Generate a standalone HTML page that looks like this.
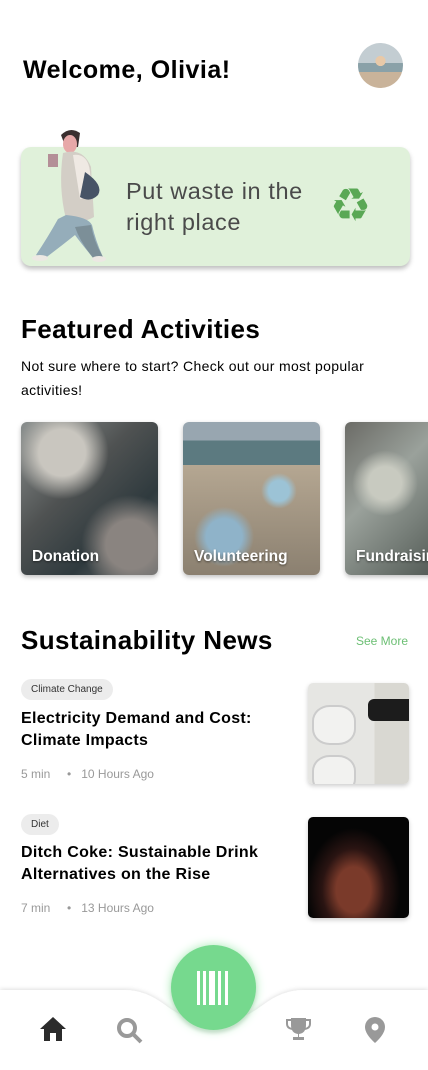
<!DOCTYPE html>
<html><head><meta charset="utf-8"><style>
*{margin:0;padding:0;box-sizing:border-box}
body{width:428px;height:1070px;background:#fff;font-family:"Liberation Sans","DejaVu Sans",sans-serif;position:relative;overflow:hidden;color:#000}
.abs{position:absolute}
h1{position:absolute;left:23px;top:56px;font-size:25px;font-weight:bold;letter-spacing:.5px}
.av{left:358px;top:43px;width:45px;height:45px;border-radius:50%;background:radial-gradient(circle at 50% 40%,#e8c9a8 0 14%,transparent 15%),linear-gradient(#c3cdd2 0 45%,#8aa1a8 45% 65%,#c9b39a 65%)}
.banner{left:21px;top:147px;width:389px;height:119px;background:#e0f1da;border-radius:10px;box-shadow:0 3px 5px rgba(0,0,0,.25)}
.btxt{left:126px;top:176px;font-size:23.5px;line-height:31px;color:#4a4a4a;letter-spacing:.6px}
.h2{font-size:26px;font-weight:bold;left:21px;letter-spacing:.4px}
.card{top:422px;width:137px;height:153px;border-radius:6px;box-shadow:0 2px 5px rgba(0,0,0,.25);overflow:hidden}
.card span{position:absolute;left:11px;bottom:9px;color:#fff;font-size:15.5px;font-weight:bold;text-shadow:0 1px 2px rgba(0,0,0,.5)}
.tag{left:21px;height:21px;border-radius:11px;background:#ececec;font-size:10px;line-height:21px;padding:0 10px;color:#333}
.nt{left:21px;font-size:16px;font-weight:bold;line-height:22px;letter-spacing:.3px}
.meta{left:21px;font-size:12px;color:#999}
.thumb{left:308px;width:101px;height:101px;border-radius:5px;box-shadow:0 2px 5px rgba(0,0,0,.2);overflow:hidden}
</style></head><body>
<h1>Welcome, Olivia!</h1>
<div class="abs av"></div>
<div class="abs banner"></div>
<svg class="abs" style="left:28px;top:127px" width="80" height="135" viewBox="0 0 80 135">
<path d="M33 8 Q42 -1 52 6 L50 20 Q42 20 36 16Z" fill="#3a2f2f"/>
<ellipse cx="42" cy="17" rx="7" ry="9" fill="#e7a8a8"/>
<path d="M35 26 Q55 20 63 40 L66 90 Q52 98 38 92 Q30 60 35 26Z" fill="#d3cec6"/>
<path d="M45 28 Q60 26 62 45 L64 70 L52 72Z" fill="#efe9e3"/>
<path d="M57 45 Q76 58 70 68 Q62 76 52 70Z" fill="#475466"/>
<rect x="20" y="27" width="10" height="13" fill="#b48f97"/>
<path d="M38 88 Q60 90 64 98 Q68 115 75 130 L66 132 Q52 115 47 108 Q32 120 16 132 L8 128 Q20 110 30 92Z" fill="#95adba"/>
<path d="M47 100 Q52 115 66 132 L75 130 Q66 115 63 98Z" fill="#7c8f98"/>
<ellipse cx="12" cy="131" rx="8" ry="3" fill="#ece8e3"/><ellipse cx="71" cy="132" rx="7" ry="3" fill="#ece8e3"/>
</svg>
<div class="abs btxt">Put waste in the<br>right place</div>
<div class="abs" style="left:330px;top:182px;font-size:46px;color:#5aa855;line-height:46px">♻</div>
<div class="abs h2" style="top:314px">Featured Activities</div>
<div class="abs" style="left:21px;top:354px;font-size:14px;line-height:24px;letter-spacing:.35px">Not sure where to start? Check out our most popular<br>activities!</div>
<div class="abs card" style="left:21px;background:radial-gradient(circle at 30% 20%,#c9c6bf 0 15%,transparent 30%),radial-gradient(circle at 80% 80%,#8a8480 0 15%,transparent 30%),linear-gradient(135deg,#8a8f8e,#4f5252 40%,#2f3a3e 70%,#6d7070)"><span>Donation</span></div>
<div class="abs card" style="left:183px;background:radial-gradient(circle at 30% 75%,#8fb3c9 0 12%,transparent 20%),radial-gradient(circle at 70% 45%,#9cc3d6 0 8%,transparent 14%),linear-gradient(#98a6b0 0 12%,#5c7a80 12% 28%,#b5a792 28%,#8b8070)"><span>Volunteering</span></div>
<div class="abs card" style="left:345px;width:100px;background:radial-gradient(circle at 40% 40%,#c8cac0 0 15%,transparent 30%),linear-gradient(135deg,#6b6b66,#9aa19b 40%,#4d5550)"><span>Fundraising</span></div>
<div class="abs h2" style="top:625px">Sustainability News</div>
<div class="abs" style="left:356px;top:634px;font-size:12px;color:#6cbf74">See More</div>
<div class="abs tag" style="top:679px">Climate Change</div>
<div class="abs nt" style="top:708px">Electricity Demand and Cost:<br>Climate Impacts</div>
<div class="abs meta" style="top:767px">5 min &nbsp;&nbsp;&nbsp;&nbsp;•&nbsp;&nbsp; 10 Hours Ago</div>
<div class="abs thumb" style="top:683px;background:linear-gradient(90deg,#e6e6e3 0 66%,#d9d8d2 66%)">
<div class="abs" style="left:4px;top:22px;width:44px;height:40px;border-radius:40%;border:2px solid #ccc;background:#f2f2f0"></div>
<div class="abs" style="left:4px;top:72px;width:44px;height:40px;border-radius:40%;border:2px solid #ccc;background:#f2f2f0"></div>
<div class="abs" style="left:60px;top:16px;width:50px;height:22px;border-radius:6px;background:#1c1c1c"></div>
</div>
<div class="abs tag" style="top:814px">Diet</div>
<div class="abs nt" style="top:842px">Ditch Coke: Sustainable Drink<br>Alternatives on the Rise</div>
<div class="abs meta" style="top:901px">7 min &nbsp;&nbsp;&nbsp;&nbsp;•&nbsp;&nbsp; 13 Hours Ago</div>
<div class="abs thumb" style="top:817px;background:radial-gradient(ellipse at 45% 72%,#7a3a2a 0 22%,#2a1412 40%,#050505 60%)"></div>
<svg class="abs" style="left:0;top:980px" width="428" height="90">
<defs><filter id="s"><feDropShadow dx="0" dy="-1" stdDeviation="2" flood-opacity=".12"/></filter></defs>
<path d="M0 10 H125 Q145 10 165 25 Q214 62 263 25 Q283 10 303 10 H428 V90 H0Z" fill="#fff" filter="url(#s)"/>
</svg>
<div class="abs" style="left:171px;top:945px;width:85px;height:85px;border-radius:50%;background:#76d98e;box-shadow:0 0 10px #a8eab6,0 3px 3px rgba(0,0,0,.15)"></div>
<svg class="abs" style="left:196px;top:971px" width="35" height="34"><g fill="#fff"><rect x="1" width="3" height="34"/><rect x="7" width="3" height="34"/><rect x="13" width="6" height="34"/><rect x="22" width="3" height="34"/><rect x="29" width="3" height="34"/></g></svg>
<svg class="abs" style="left:40px;top:1017px" width="26" height="24" viewBox="0 0 26 24"><path d="M13 0 L26 12 H22 V24 H16 V16 H10 V24 H4 V12 H0Z" fill="#2b2b2b"/></svg>
<svg class="abs" style="left:116px;top:1017px" width="27" height="27"><circle cx="11" cy="11" r="8" fill="none" stroke="#999" stroke-width="4"/><path d="M17 17 L25 25" stroke="#999" stroke-width="4"/></svg>
<svg class="abs" style="left:285px;top:1017px" width="27" height="25"><path d="M6 1 H21 V8 Q21 16 14 17 V20 H19 V23 H8 V20 H13 V17 Q6 16 6 8Z" fill="#999"/><path d="M6 3 H2 V7 Q2 11 7 12 M21 3 H25 V7 Q25 11 20 12" fill="none" stroke="#999" stroke-width="2"/></svg>
<svg class="abs" style="left:365px;top:1017px" width="20" height="26" viewBox="0 0 20 26"><path d="M10 0 A10 10 0 0 1 20 10 Q20 17 10 26 Q0 17 0 10 A10 10 0 0 1 10 0Z" fill="#999"/><circle cx="10" cy="10" r="3.5" fill="#fff"/></svg>
</body></html>
